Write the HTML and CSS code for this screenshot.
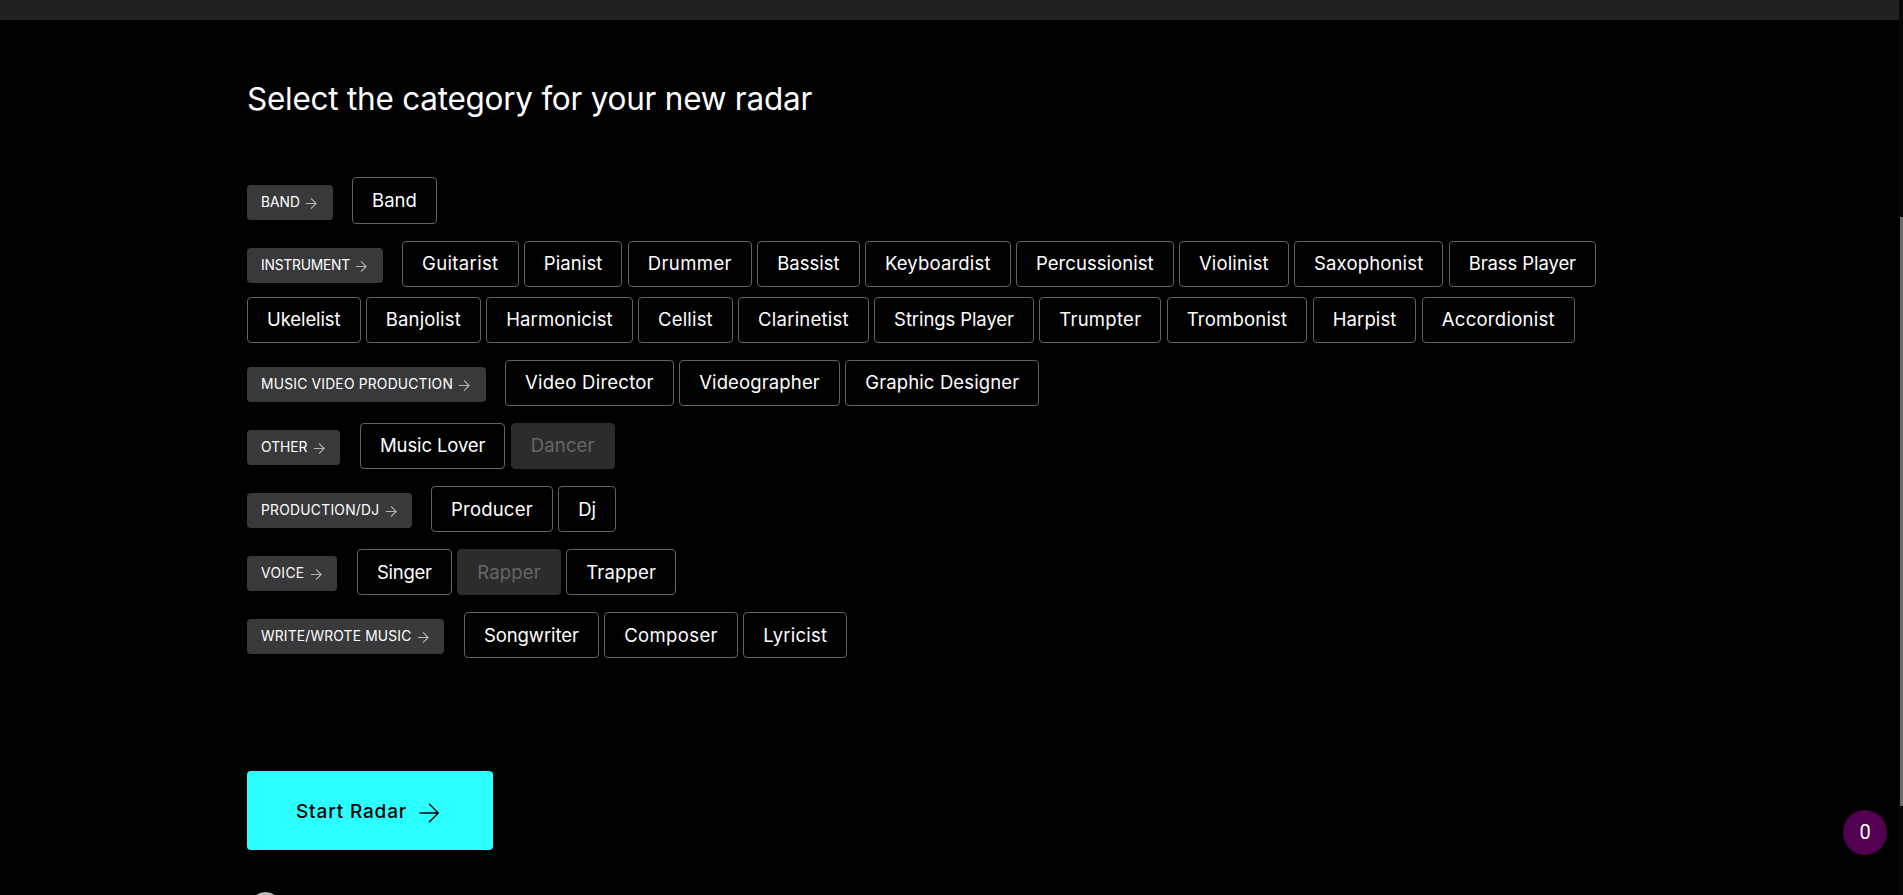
FILE: index.html
```html
<!DOCTYPE html>
<html lang="en">
<head>
<meta charset="utf-8">
<title>New radar</title>
<link rel="stylesheet" href="styles.css">
</head>
<body>
<svg class="defs" width="0" height="0"><symbol id="arrow" viewBox="0 0 20 20"><path d="M.5 10H19M10 .7L19.3 10L10 19.3" fill="none" stroke="currentColor"/></symbol></svg>
<div class="topbar"></div>
<main class="page">
  <h1 class="title"><span data-fit="565">Select the category for your new radar</span></h1>
  <div class="groups" id="groups"></div>
  <button class="start"><span data-fit="111">Start Radar</span><svg class="start-arrow"><use href="#arrow"/></svg></button>
  <div class="avatar"></div>
</main>
<div class="badge">0</div>
<div class="scrollbar"><div class="thumb"></div></div>
<script src="app.js"></script>
</body>
</html>
```
FILE: styles.css
```css
* { box-sizing: border-box; }
html, body { height: 100%; }
body {
  margin: 0;
  overflow: hidden;
  background: #000;
  color: #fff;
  font-family: Inter, "Open Sans", sans-serif;
}
.defs { position: absolute; }
.topbar { height: 20px; background: #212121; }
.page { padding: 58px 247px 0; }
.title {
  margin: 0;
  height: 42px;
  font-size: 31.5px;
  line-height: 42px;
  font-weight: 400;
  white-space: nowrap;
}
.groups {
  display: flex;
  flex-direction: column;
  gap: 17px;
  padding-top: 57px;
}
.line { display: flex; height: 46px; align-items: flex-start; }
.line.first { height: 47px; }
.line.wrapped { margin-top: -7px; }
.pill {
  display: flex;
  align-items: center;
  height: 35px;
  margin: 7px 19px 0 0;
  padding-left: 14px;
  border-radius: 4px;
  background: #39393b;
  font-size: 13.8px;
  line-height: 35px;
  white-space: nowrap;
}
.pill.spaced { margin-right: 20px; }
.first .pill { margin-top: 8px; }
.pill svg { width: 12px; height: 11px; margin: 1px 0 0 5px; color: #b4b4b4; stroke-width: 2; }
.chip {
  height: 100%;
  margin-right: 5.33px;
  padding-left: 19px;
  border: 1px solid #626262;
  border-radius: 4px;
  font-size: 18.5px;
  line-height: 44px;
  white-space: nowrap;
}
.raised .chip { line-height: 42px; }
.chip.off { border-color: #2c2c2c; background: #2c2c2c; color: #666; }
.start {
  display: flex;
  align-items: center;
  width: 246px;
  height: 79px;
  margin-top: 113px;
  padding: 0 0 0 49px;
  border: 0;
  border-radius: 4px;
  background: #2bffff;
  color: #000;
  font: 500 19px Inter, "Open Sans", sans-serif;
  white-space: nowrap;
}
.start span { padding-top: 2px; }
.start-arrow { width: 20px; height: 20px; margin: 4px 0 0 12px; stroke-width: 1.5; }
.avatar { width: 31px; height: 31px; margin: 42px 0 0 3px; border-radius: 50%; background: #b9b9b9; }
.badge {
  position: fixed;
  right: 16px;
  bottom: 40px;
  width: 44px;
  height: 45px;
  border-radius: 50%;
  background: #52004f;
  font: 20px/44px Roboto, sans-serif;
  text-align: center;
}
.scrollbar {
  position: fixed;
  top: 0;
  right: 0;
  width: 4px;
  height: 100%;
  padding: 217px 0 0 1px;
  background: #070707;
}
.thumb { height: 589px; background: #6b6b6b; }
```
FILE: app.js
```js
// Each line: category label with its pill and text widths, then chips as [name, width, disabled].
const lines = [
  { pill: ["BAND", 86, 39], chips: [["Band", 85]] },
  { raised: true, pill: ["INSTRUMENT", 136, 89], chips: [["Guitarist", 116.5], ["Pianist", 98.6], ["Drummer", 124.2], ["Bassist", 102.3], ["Keyboardist", 145.8], ["Percussionist", 157.6], ["Violinist", 109.8], ["Saxophonist", 149.3], ["Brass Player", 147.3]] },
  { raised: true, chips: [["Ukelelist", 113.5], ["Banjolist", 115], ["Harmonicist", 146.6], ["Cellist", 94.7], ["Clarinetist", 130.7], ["Strings Player", 159.8], ["Trumpter", 122.2], ["Trombonist", 140.6], ["Harpist", 103.8], ["Accordionist", 153]] },
  { raised: true, pill: ["MUSIC VIDEO PRODUCTION", 239, 192], chips: [["Video Director", 168.8], ["Videographer", 160.8], ["Graphic Designer", 194]] },
  { raised: true, spaced: true, pill: ["OTHER", 93, 46.5], chips: [["Music Lover", 145.4], ["Dancer", 104, true]] },
  { pill: ["PRODUCTION/DJ", 165, 118.5], chips: [["Producer", 121.8], ["Dj", 58]] },
  { spaced: true, pill: ["VOICE", 90, 43.5], chips: [["Singer", 94.8], ["Rapper", 103.8, true], ["Trapper", 110]] },
  { spaced: true, pill: ["WRITE/WROTE MUSIC", 197, 150.5], chips: [["Songwriter", 134.8], ["Composer", 133.8], ["Lyricist", 104]] },
];

document.getElementById("groups").innerHTML = lines.map((line, i) => {
  const cls = "line" + (i === 0 ? " first" : "") + (line.pill ? "" : " wrapped") + (line.raised ? " raised" : "");
  const pill = line.pill
    ? `<div class="pill${line.spaced ? " spaced" : ""}" style="width:${line.pill[1]}px"><span data-fit="${line.pill[2]}">${line.pill[0]}</span><svg><use href="#arrow"/></svg></div>`
    : "";
  const chips = line.chips.map(([name, width, off]) =>
    `<div class="chip${off ? " off" : ""}" style="width:${width}px"><span data-fit="${width - 40}">${name}</span></div>`).join("");
  return `<div class="${cls}">${pill}${chips}</div>`;
}).join("");

// Track each label so that it fills its allotted width.
document.querySelectorAll("[data-fit]").forEach((el) => {
  const spare = Number(el.dataset.fit) - el.getBoundingClientRect().width;
  el.style.letterSpacing = spare / el.textContent.length + "px";
});
```
